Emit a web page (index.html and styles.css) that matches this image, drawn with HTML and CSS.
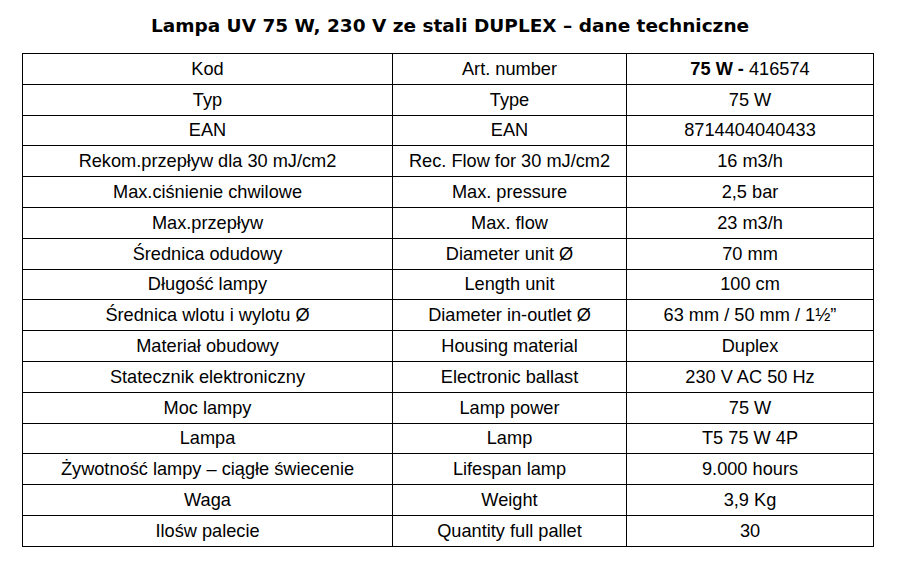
FILE: index.html
```html
<!DOCTYPE html>
<html lang="pl">
<head>
<meta charset="utf-8">
<title>Lampa UV 75 W</title>
<link rel="stylesheet" href="styles.css">
</head>
<body>
<div class="page">
  <h1 class="title">Lampa UV 75 W, 230 V ze stali DUPLEX – dane techniczne</h1>
  <table class="spec">
    <colgroup><col class="c1"><col class="c2"><col class="c3"></colgroup>
    <tbody>
      <tr><td>Kod</td><td>Art. number</td><td><b>75 W -</b> 416574</td></tr>
      <tr><td>Typ</td><td>Type</td><td>75 W</td></tr>
      <tr><td>EAN</td><td>EAN</td><td>8714404040433</td></tr>
      <tr><td>Rekom.przepływ dla 30 mJ/cm2</td><td>Rec. Flow for 30 mJ/cm2</td><td>16 m3/h</td></tr>
      <tr><td>Max.ciśnienie chwilowe</td><td>Max. pressure</td><td>2,5 bar</td></tr>
      <tr><td>Max.przepływ</td><td>Max. flow</td><td>23 m3/h</td></tr>
      <tr><td>Średnica odudowy</td><td>Diameter unit Ø</td><td>70 mm</td></tr>
      <tr><td>Długość lampy</td><td>Length unit</td><td>100 cm</td></tr>
      <tr><td>Średnica wlotu i wylotu Ø</td><td>Diameter in-outlet Ø</td><td>63 mm / 50 mm / 1½”</td></tr>
      <tr><td>Materiał obudowy</td><td>Housing material</td><td>Duplex</td></tr>
      <tr><td>Statecznik elektroniczny</td><td>Electronic ballast</td><td>230 V AC 50 Hz</td></tr>
      <tr><td>Moc lampy</td><td>Lamp power</td><td>75 W</td></tr>
      <tr><td>Lampa</td><td>Lamp</td><td>T5 75 W 4P</td></tr>
      <tr><td>Żywotność lampy – ciągłe świecenie</td><td>Lifespan lamp</td><td>9.000 hours</td></tr>
      <tr><td>Waga</td><td>Weight</td><td>3,9 Kg</td></tr>
      <tr><td>Ilośw palecie</td><td>Quantity full pallet</td><td>30</td></tr>
    </tbody>
  </table>
</div>
</body>
</html>
```

FILE: styles.css
```css
html, body {
  margin: 0;
  padding: 0;
  background: #fff;
}
.page {
  width: 900px;
  padding-top: 13px;
  display: flex;
  flex-direction: column;
  align-items: flex-start;
}
.title {
  margin: 0 0 15px 0;
  width: 900px;
  text-align: center;
  font-family: "DejaVu Sans", Verdana, sans-serif;
  font-weight: bold;
  font-size: 18.5px;
  line-height: 25px;
  color: #000;
}
.spec {
  margin-left: 22px;
  border-collapse: collapse;
  table-layout: fixed;
  width: 851px;
  font-family: "Liberation Sans", Arial, sans-serif;
  font-size: 18.2px;
  color: #000;
}
.c1 { width: 370px; }
.c2 { width: 234px; }
.c3 { width: 247px; }
.spec td {
  border: 1px solid #000;
  height: 29.8px;
  padding: 0;
  text-align: center;
  vertical-align: middle;
  line-height: 20px;
}
.spec b { font-weight: bold; }
```
